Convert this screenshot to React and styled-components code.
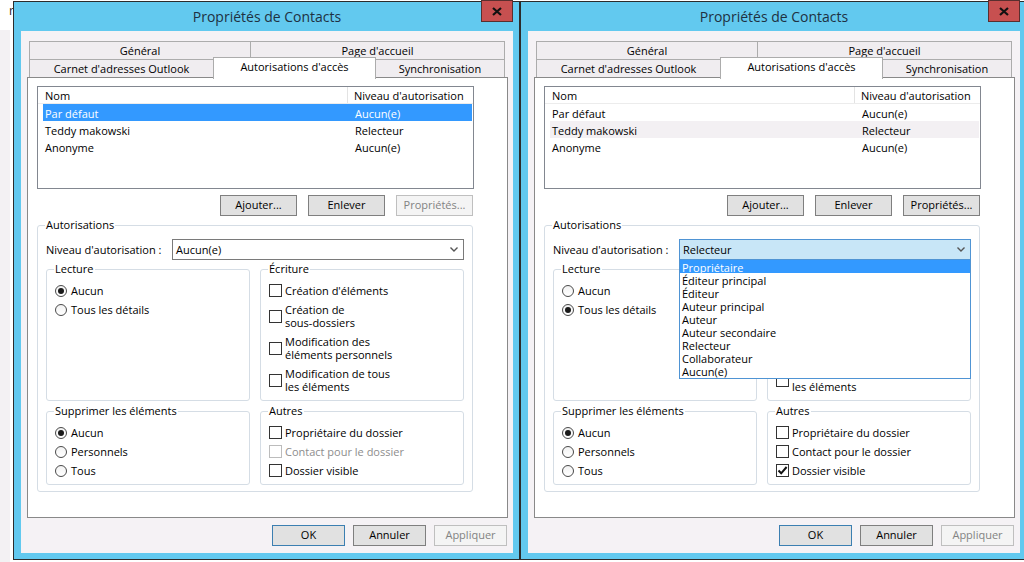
import React from 'react';
import styled, { createGlobalStyle, css } from 'styled-components';

const GlobalStyle = createGlobalStyle`
  html, body { margin: 0; padding: 0; background: #fff; }
  body {
    font-family: "Open Sans", "Noto Sans", sans-serif;
    font-size: 11px;
    color: #000;
    overflow: hidden;
  }
  * { box-sizing: border-box; }
`;

const Page = styled.div`
  display: flex;
  align-items: flex-start;
  width: 1024px;
  height: 562px;
  overflow: hidden;
  padding-top: 1px;
`;

const Gutter = styled.div`
  width: 13px;
  height: 562px;
  margin-top: -1px;
  flex-shrink: 0;
  display: flex;
  flex-direction: column;
`;

const GutterTop = styled.div`
  height: 30px;
  padding: 2px 0 0 9px;
  overflow: hidden;
  font-size: 12px;
  color: #222;
`;

const GutterRest = styled.div`
  flex: 1;
  background: #f3f1f3;
  border-right: 3px solid #fff;
`;

const Window = styled.div`
  width: 507px;
  height: 559px;
  flex-shrink: 0;
  display: flex;
  flex-direction: column;
  background: #62c9ef;
  border: 1px solid #2c2c2c;
  padding: 0 6px 6px 7px;
`;

const TitleBar = styled.div`
  height: 29px;
  flex-shrink: 0;
  display: grid;
  grid-template-columns: 1fr auto 1fr;
  align-items: center;
`;

const Title = styled.div`
  grid-column: 2;
  font-size: 14px;
  color: #1e3142;
  padding-bottom: 1px;
`;

const CloseButton = styled.div`
  grid-column: 3;
  justify-self: end;
  align-self: start;
  width: 32px;
  height: 22px;
  margin-top: -2px;
  background: #c75050;
  border: 1px solid #5a2e2e;
  display: flex;
  align-items: center;
  justify-content: center;
`;

const Client = styled.div`
  flex: 1;
  background: #f5f2f5;
  padding: 10px 5px 7px 6px;
  display: flex;
  flex-direction: column;
`;

const TabStrip = styled.div`
  padding-left: 2px;
  display: flex;
  flex-direction: column;
`;

const TabRow = styled.div`
  display: flex;
  align-items: flex-start;
`;

const Tab = styled.div`
  width: ${p => p.$w}px;
  height: 18px;
  margin-left: ${p => (p.$first ? 0 : -1)}px;
  display: flex;
  align-items: center;
  justify-content: center;
  background: #f0edf0;
  border: 1px solid #acacac;
  border-bottom: none;
  white-space: nowrap;
  ${p => p.$active && css`
    position: relative;
    z-index: 1;
    height: 22px;
    margin-top: -2px;
    margin-bottom: -2px;
    padding-bottom: 4px;
    background: #fff;
  `}
`;

const Pane = styled.div`
  width: 481px;
  height: 441px;
  background: #fff;
  border: 1px solid #898989;
  padding: 8px 0 0 9px;
  display: flex;
  flex-direction: column;
`;

const ListView = styled.div`
  width: 437px;
  height: 103px;
  border: 1px solid #828790;
  background: #fff;
  display: flex;
  flex-direction: column;
`;

const ListHeader = styled.div`
  display: grid;
  grid-template-columns: 310px 1fr;
  height: 17px;
  border-bottom: 1px solid #ececec;
  padding-top: 1px;
  line-height: 15px;
`;

const HeaderCell = styled.div`
  padding-left: ${p => p.$pad}px;
  border-right: ${p => (p.$sep ? '1px solid #e3e3e3' : 'none')};
  margin-top: -1px;
  padding-top: 1px;
  white-space: nowrap;
`;

const ListRow = styled.div`
  display: grid;
  grid-template-columns: 305px 1fr;
  height: 17px;
  line-height: 15px;
  padding-top: 2px;
  margin: 0 1px 0 5px;
  padding-left: 2px;
  white-space: nowrap;
  background: ${p => (p.$sel === 'active' ? '#3399ff' : p.$sel === 'inactive' ? '#f3f0f3' : 'transparent')};
  color: ${p => (p.$sel === 'active' ? '#fff' : '#000')};
  & > span:last-child { padding-left: 5px; }
`;

const ButtonRow = styled.div`
  display: flex;
  justify-content: flex-end;
  gap: ${p => p.$gap}px;
  margin-top: ${p => p.$top}px;
  padding-right: ${p => p.$right}px;
  width: ${p => (p.$w ? `${p.$w}px` : 'auto')};
`;

const Button = styled.button`
  width: ${p => p.$w}px;
  height: 21px;
  padding: 0 0 2px 0;
  font: inherit;
  color: ${p => (p.disabled ? '#838383' : '#000')};
  background: ${p => (p.disabled ? '#f4f4f4' : '#e1e1e1')};
  border: 1px solid ${p => (p.disabled ? '#bfbfbf' : p.$default ? '#3c7fb1' : '#7f7f7f')};
  border-radius: 0;
`;

const Group = styled.fieldset`
  margin: ${p => p.$top || 0}px 0 0 0;
  min-width: 0;
  width: ${p => (p.$w ? `${p.$w}px` : 'auto')};
  border: 1px solid #d5dde5;
  border-radius: 3px;
  padding: 0 8px ${p => p.$bottom}px 8px;
`;

const Legend = styled.legend`
  padding: 0 1px;
  margin-left: -1px;
  line-height: 16px;
  white-space: nowrap;
`;

const LevelRow = styled.div`
  display: flex;
  align-items: center;
  height: 21px;
  margin-top: 6px;
`;

const LevelLabel = styled.div`
  width: 126px;
  padding-bottom: 1px;
  white-space: nowrap;
`;

const Select = styled.div`
  position: relative;
  width: 292px;
  height: 21px;
  display: flex;
  align-items: center;
  padding: 0 0 1px 3px;
  background: ${p => (p.$open ? '#c8e6f7' : '#fff')};
  border: 1px solid ${p => (p.$open ? '#4f94d4' : '#7a7a7a')};
`;

const Chevron = styled.svg`
  margin-left: auto;
  margin-right: 5px;
`;

const DropList = styled.div`
  position: absolute;
  top: 19px;
  left: -1px;
  width: 292px;
  z-index: 5;
  background: #fff;
  border: 1px solid #4f94d4;
  padding-bottom: 1px;
  display: flex;
  flex-direction: column;
`;

const DropItem = styled.div`
  height: 13px;
  line-height: 11px;
  padding: 2px 0 0 2px;
  white-space: nowrap;
  background: ${p => (p.$hl ? '#3399ff' : 'transparent')};
  color: ${p => (p.$hl ? '#fff' : '#000')};
`;

const SubGrid = styled.div`
  display: grid;
  grid-template-columns: 204px 204px;
  column-gap: 10px;
  row-gap: 2px;
  margin-top: 1px;
`;

const Options = styled.div`
  display: flex;
  flex-direction: column;
  gap: 6px;
  padding-top: 7px;
`;

const Option = styled.div`
  display: flex;
  align-items: center;
  line-height: 13px;
  color: ${p => (p.$disabled ? '#8d8d8d' : '#000')};
`;

const RadioMark = styled.span`
  width: 12px;
  height: 12px;
  flex-shrink: 0;
  margin-right: 4px;
  border-radius: 50%;
  border: 1px solid #4a4a4a;
  background: linear-gradient(#f2f2f2, #fff);
  display: flex;
  align-items: center;
  justify-content: center;
  &::after {
    content: '';
    display: ${p => (p.$on ? 'block' : 'none')};
    width: 6px;
    height: 6px;
    border-radius: 50%;
    background: #1a1a1a;
  }
`;

const CheckMark = styled.span`
  width: 13px;
  height: 13px;
  flex-shrink: 0;
  margin-right: 3px;
  border: 1px solid ${p => (p.$disabled ? '#bcbcbc' : '#333')};
  background: #fff;
  display: flex;
  align-items: center;
  justify-content: center;
`;

const Radio = ({ on, children }) => (
  <Option>
    <RadioMark $on={on} />
    <span>{children}</span>
  </Option>
);

const Check = ({ on, disabled, children }) => (
  <Option $disabled={disabled}>
    <CheckMark $disabled={disabled}>
      {on && (
        <svg width="11" height="11" viewBox="0 0 11 11">
          <path d="M1.5 5.5 L4.2 8.3 L9.6 2" fill="none" stroke="#111" strokeWidth="2" />
        </svg>
      )}
    </CheckMark>
    <span>{children}</span>
  </Option>
);

const levels = [
  'Propriétaire', 'Éditeur principal', 'Éditeur', 'Auteur principal', 'Auteur',
  'Auteur secondaire', 'Relecteur', 'Collaborateur', 'Aucun(e)'
];

const users = [
  ['Par défaut', 'Aucun(e)'],
  ['Teddy makowski', 'Relecteur'],
  ['Anonyme', 'Aucun(e)']
];

const dialogs = [
  { selRow: 0, selKind: 'active', propsOn: false, level: 'Aucun(e)', open: false, lecture: 0, contactOff: true, visible: false },
  { selRow: 1, selKind: 'inactive', propsOn: true, level: 'Relecteur', open: true, lecture: 1, contactOff: false, visible: true }
];

function Dialog({ d }) {
  return (
    <Window>
      <TitleBar>
        <Title>Propriétés de Contacts</Title>
        <CloseButton>
          <svg width="10" height="9" viewBox="0 0 10 9">
            <path d="M1 1 L9 8 M9 1 L1 8" stroke="#111" strokeWidth="2.2" />
          </svg>
        </CloseButton>
      </TitleBar>
      <Client>
        <TabStrip>
          <TabRow>
            <Tab $w={222} $first>Général</Tab>
            <Tab $w={255}>Page d'accueil</Tab>
          </TabRow>
          <TabRow>
            <Tab $w={185} $first>Carnet d'adresses Outlook</Tab>
            <Tab $w={163} $active>Autorisations d'accès</Tab>
            <Tab $w={130}>Synchronisation</Tab>
          </TabRow>
        </TabStrip>
        <Pane>
          <ListView>
            <ListHeader>
              <HeaderCell $pad={7} $sep>Nom</HeaderCell>
              <HeaderCell $pad={6}>Niveau d'autorisation</HeaderCell>
            </ListHeader>
            {users.map(([name, lvl], i) => (
              <ListRow key={name} $sel={i === d.selRow ? d.selKind : null}>
                <span>{name}</span>
                <span>{lvl}</span>
              </ListRow>
            ))}
          </ListView>
          <ButtonRow $gap={11} $top={6} $right={1} $w={437}>
            <Button $w={77}>Ajouter...</Button>
            <Button $w={77}>Enlever</Button>
            <Button $w={77} disabled={!d.propsOn}>Propriétés...</Button>
          </ButtonRow>
          <Group $w={436} $top={1} $bottom={6}>
            <Legend>Autorisations</Legend>
            <LevelRow>
              <LevelLabel>Niveau d'autorisation :</LevelLabel>
              <Select $open={d.open}>
                <span>{d.level}</span>
                <Chevron width="8" height="5" viewBox="0 0 8 5">
                  <path d="M0.5 0.5 L4 4 L7.5 0.5" fill="none" stroke="#555" strokeWidth="1.4" />
                </Chevron>
                {d.open && (
                  <DropList>
                    {levels.map((l, i) => (
                      <DropItem key={l} $hl={i === 0}>{l}</DropItem>
                    ))}
                  </DropList>
                )}
              </Select>
            </LevelRow>
            <SubGrid>
              <Group $bottom={7}>
                <Legend>Lecture</Legend>
                <Options>
                  <Radio on={d.lecture === 0}>Aucun</Radio>
                  <Radio on={d.lecture === 1}>Tous les détails</Radio>
                </Options>
              </Group>
              <Group $bottom={7}>
                <Legend>Écriture</Legend>
                <Options>
                  <Check>Création d'éléments</Check>
                  <Check>Création de<br />sous-dossiers</Check>
                  <Check>Modification des<br />éléments personnels</Check>
                  <Check>Modification de tous<br />les éléments</Check>
                </Options>
              </Group>
              <Group $bottom={7}>
                <Legend>Supprimer les éléments</Legend>
                <Options>
                  <Radio on>Aucun</Radio>
                  <Radio>Personnels</Radio>
                  <Radio>Tous</Radio>
                </Options>
              </Group>
              <Group $bottom={7}>
                <Legend>Autres</Legend>
                <Options>
                  <Check>Propriétaire du dossier</Check>
                  <Check disabled={d.contactOff}>Contact pour le dossier</Check>
                  <Check on={d.visible}>Dossier visible</Check>
                </Options>
              </Group>
            </SubGrid>
          </Group>
        </Pane>
        <ButtonRow $gap={8} $top={7} $right={1}>
          <Button $w={73} $default>OK</Button>
          <Button $w={73}>Annuler</Button>
          <Button $w={73} disabled>Appliquer</Button>
        </ButtonRow>
      </Client>
    </Window>
  );
}

export default function App() {
  return (
    <>
      <GlobalStyle />
      <Page>
        <Gutter>
          <GutterTop>r</GutterTop>
          <GutterRest />
        </Gutter>
        {dialogs.map((d, i) => (
          <Dialog key={i} d={d} />
        ))}
      </Page>
    </>
  );
}
